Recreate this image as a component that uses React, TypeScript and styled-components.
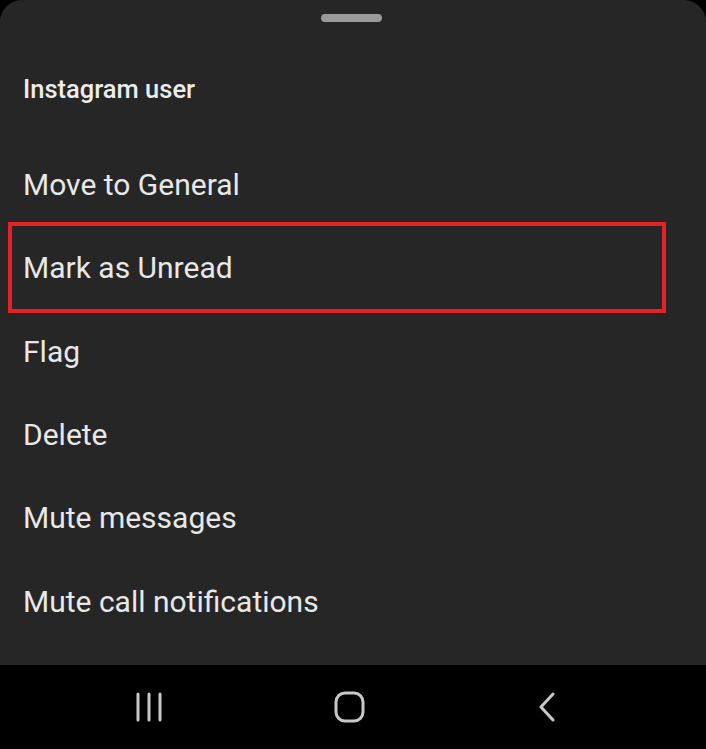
import React from "react";
import styled, { createGlobalStyle } from "styled-components";

const GlobalStyle = createGlobalStyle`
  html, body {
    margin: 0;
    padding: 0;
    background: #000;
  }
  body {
    font-family: Roboto, "Noto Sans", "Liberation Sans", sans-serif;
  }
`;

const Screen = styled.div`
  width: 706px;
  height: 749px;
  display: flex;
  flex-direction: column;
  background: #000;
  overflow: hidden;
`;

const Sheet = styled.div`
  height: 665px;
  background: #262626;
  border-radius: 22px 22px 0 0;
  padding-top: 14px;
  box-sizing: border-box;
  display: flex;
  flex-direction: column;
`;

const Handle = styled.div`
  width: 61px;
  height: 8px;
  border-radius: 4px;
  background: #9a9a9a;
  align-self: center;
  margin-left: -4px;
`;

const Title = styled.div`
  padding: 52px 23px 39px;
  font-size: 25.5px;
  line-height: 30px;
  font-weight: 500;
  color: #ececec;
`;

const Menu = styled.div`
  display: flex;
  flex-direction: column;
`;

const Item = styled.div<{ $marked?: boolean }>`
  position: relative;
  height: 83.33px;
  display: flex;
  align-items: center;
  padding-left: 23px;
  font-size: 30px;
  color: #e8e8e8;

  ${(p) =>
    p.$marked &&
    `
    &::after {
      content: "";
      position: absolute;
      left: 8px;
      top: -4px;
      width: 658px;
      height: 91px;
      box-sizing: border-box;
      border: 4px solid #e81f27;
    }
  `}
`;

const NavBar = styled.div`
  flex: 1;
  display: flex;
  align-items: center;
  justify-content: space-between;
  padding: 0 149px 0 135px;
`;

const NavButton = styled.div`
  display: flex;
  align-items: center;
  justify-content: center;
`;

const items = [
  "Move to General",
  "Mark as Unread",
  "Flag",
  "Delete",
  "Mute messages",
  "Mute call notifications",
];

export default function App() {
  return (
    <>
      <GlobalStyle />
      <Screen>
        <Sheet>
          <Handle />
          <Title>Instagram user</Title>
          <Menu>
            {items.map((label) => (
              <Item key={label} $marked={label === "Mark as Unread"}>
                {label}
              </Item>
            ))}
          </Menu>
        </Sheet>
        <NavBar>
          <NavButton>
            <svg width="28" height="30" viewBox="0 0 28 30">
              <g stroke="#c8c8c8" strokeWidth="3" strokeLinecap="round">
                <line x1="3" y1="2" x2="3" y2="28" />
                <line x1="14" y1="2" x2="14" y2="28" />
                <line x1="25" y1="2" x2="25" y2="28" />
              </g>
            </svg>
          </NavButton>
          <NavButton>
            <svg width="32" height="32" viewBox="0 0 32 32">
              <rect
                x="2"
                y="2"
                width="27"
                height="28"
                rx="9"
                fill="none"
                stroke="#c8c8c8"
                strokeWidth="3"
              />
            </svg>
          </NavButton>
          <NavButton>
            <svg width="20" height="30" viewBox="0 0 20 30">
              <polyline
                points="16,2 4,15 16,28"
                fill="none"
                stroke="#c8c8c8"
                strokeWidth="3"
                strokeLinecap="round"
                strokeLinejoin="round"
              />
            </svg>
          </NavButton>
        </NavBar>
      </Screen>
    </>
  );
}
